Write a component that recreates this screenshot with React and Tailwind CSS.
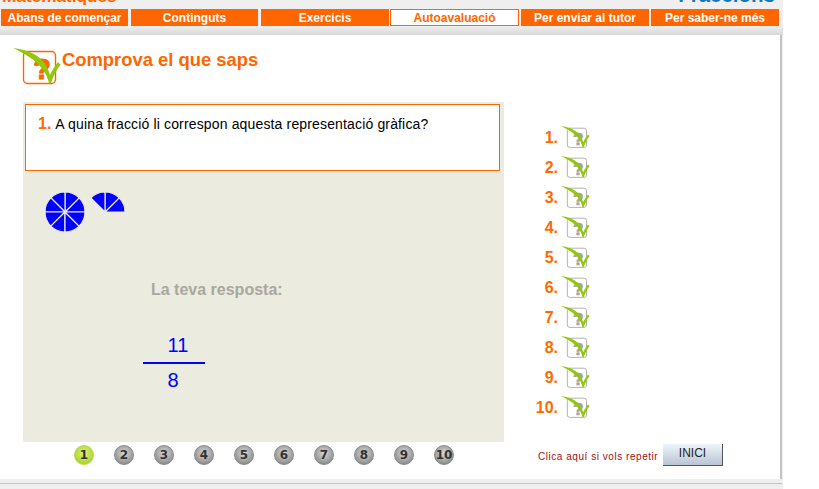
import React from "react";

const tabs = [
    { label: "Abans de començar", box: "ml-[1px] w-[127px]" },
    { label: "Continguts", box: "ml-[3px] w-[127px]" },
    { label: "Exercicis", box: "ml-[3px] w-[128px]" },
    { label: "Autoavaluació", box: "ml-[1px] w-[129px]", active: true },
    { label: "Per enviar al tutor", box: "ml-[2px] w-[128px]" },
    { label: "Per saber-ne més", box: "ml-[2px] w-[128px]" },
];
const numbers = [1, 2, 3, 4, 5, 6, 7, 8, 9, 10];

const QuestionIcon = ({ color, width, height }) => (
    <svg width={width} height={height} viewBox="0 0 50 38" className="block">
        <rect x="10.5" y="3.5" width="32" height="32" rx="4" fill="#fff" stroke={color} strokeWidth="1.4" />
        <text x="29" y="31" textAnchor="middle" fontFamily="Liberation Sans" fontWeight="900" fontSize="29" fill={color} stroke={color} strokeWidth="1">?</text>
        <path d="M0 0 C10 1 20 4 28 11 C32 15 35 20 37 27 C39 22 42 18 45 14 L47.5 16.5 C43 23 40 29 38 35 L36 35 C34 27 30 21 25 16 C18 9 8 4 0 0Z" fill="#94c70c" />
    </svg>
);

const Wedges = ({ from, count }) => {
    const wedges = [];
    for (let i = 0; i < count; i++) {
        const a = ((from + i * 45) * Math.PI) / 180;
        const b = ((from + (i + 1) * 45) * Math.PI) / 180;
        wedges.push(
            <path
                key={i}
                d={`M20 20 L${20 + 20 * Math.cos(a)} ${20 - 20 * Math.sin(a)} A20 20 0 0 0 ${20 + 20 * Math.cos(b)} ${20 - 20 * Math.sin(b)}Z`}
                fill="#0000ff"
                stroke="#ecebe0"
                strokeWidth="1.2"
            />
        );
    }
    return (
        <svg width="40" height="40" viewBox="0 0 40 40" className="block">
            {wedges}
        </svg>
    );
};

export default function App() {
    return (
        <div className="w-[819px] h-[489px] bg-white overflow-hidden font-['Liberation_Sans',Arial,sans-serif]">
            <div className="w-[783px] h-[489px] bg-[#efefef]">
                {/* page titles, cut by the top of the window */}
                <div className="h-[5px] mb-[4px] overflow-hidden flex items-end justify-between pl-[2px] pr-[8px]">
                    <span className="text-[17.2px] leading-[18px] font-bold text-[#ff6600] shrink-0">Matemàtiques</span>
                    <span className="text-[20.5px] leading-[20px] font-bold text-[#0f78c0] shrink-0">Fraccions</span>
                </div>

                <nav className="flex h-[17px]">
                    {tabs.map((tab) => (
                        <div
                            key={tab.label}
                            className={`h-[17px] flex items-center justify-center text-[12px] font-bold border border-[#ff6600] ${tab.box} ${
                                tab.active ? "bg-white text-[#ff6600]" : "bg-[#ff6600] text-white"
                            }`}
                        >
                            {tab.label}
                        </div>
                    ))}
                </nav>

                <div className="h-[9px] bg-gradient-to-b from-[#efefef] to-[#d8d8d8]"></div>

                <main className="w-[782px] h-[444px] bg-white border-r-2 border-[#c4c4c4] flex flex-col">
                    <div className="flex items-start h-[67px] pl-[13px] pt-[13px]">
                        <QuestionIcon color="#ff6600" width={50} height={38} />
                        <h1 className="text-[18.4px] leading-[22px] font-bold text-[#ff6600] -ml-[1px] mt-[1px]">Comprova el que saps</h1>
                    </div>

                    <div className="flex">
                        <section className="ml-[23px] w-[481px] h-[340px] bg-[#ecebe0] pt-[2px] pl-[2px]">
                            <div className="w-[475px] h-[67px] bg-white border border-[#ff6600] pl-[12px] pt-[9px] flex items-baseline gap-[4px]">
                                <span className="text-[16px] leading-[20px] font-bold text-[#ff6a00]">1.</span>
                                <span className="text-[14px] leading-[20px] tracking-[0.15px] text-black">A quina fracció li correspon aquesta representació gràfica?</span>
                            </div>

                            <div className="flex items-start pl-[20px] pt-[21px]">
                                <Wedges from={0} count={8} />
                                <div className="h-[20px] overflow-hidden">
                                    <Wedges from={0} count={3} />
                                </div>
                            </div>

                            <p className="mt-[49px] pl-[126px] text-[16px] leading-[18px] font-bold text-[#a8a89e]">La teva resposta:</p>

                            <div className="mt-[34px] ml-[118px] w-[62px] text-[#0000ff] text-[20px] text-center">
                                <div className="leading-[24px] pl-[8px]">11</div>
                                <div className="h-[2px] bg-[#0000ff] mt-[5px]"></div>
                                <div className="leading-[24px] mt-[4px] pr-[2px]">8</div>
                            </div>
                        </section>

                        <ul className="ml-[28px] pt-[21px] flex flex-col">
                            {numbers.map((n) => (
                                <li key={n} className="h-[30px] flex items-center">
                                    <span className="w-[26px] text-right text-[16px] font-bold text-[#ff6a00]">{n}.</span>
                                    <span className="ml-[3px] -mt-[2px]">
                                        <QuestionIcon color="#a3a3a3" width={30} height={23} />
                                    </span>
                                </li>
                            ))}
                        </ul>
                    </div>

                    <div className="flex items-start">
                        <div className="ml-[74px] w-[430px] mt-[3px] flex gap-[20px]">
                            {numbers.map((n) => (
                                <span
                                    key={n}
                                    className={`w-[20px] h-[20px] shrink-0 rounded-full flex items-center justify-center font-['DejaVu_Sans',sans-serif] text-[12px] font-bold text-[#333] ${
                                        n === 1
                                            ? "bg-[radial-gradient(circle_at_50%_40%,#dcef80,#9ccb14)] border border-[#b6dc3c]"
                                            : "bg-[radial-gradient(circle_at_50%_40%,#d8d8d8,#9a9a9a_65%,#666)] border border-[#8a8a8a]"
                                    }`}
                                >
                                    {n}
                                </span>
                            ))}
                        </div>
                        <div className="ml-[34px] mt-[2px] flex items-center">
                            <span className="text-[10px] leading-[12px] mt-[4px] tracking-[0.54px] text-[#a50f0f] w-[125px] whitespace-nowrap">Clica aquí si vols repetir</span>
                            <button className="w-[60px] h-[22px] text-[12px] leading-[18px] pb-[3px] text-[#222] bg-gradient-to-b from-[#eef5fc] to-[#b9c4d4] border-r border-b border-[#555]">INICI</button>
                        </div>
                    </div>
                </main>

                <div className="w-[782px] h-[4px] bg-[#efefef]"></div>
                <div className="w-[782px] h-px bg-[#c4c4c4]"></div>
            </div>
        </div>
    );
}
